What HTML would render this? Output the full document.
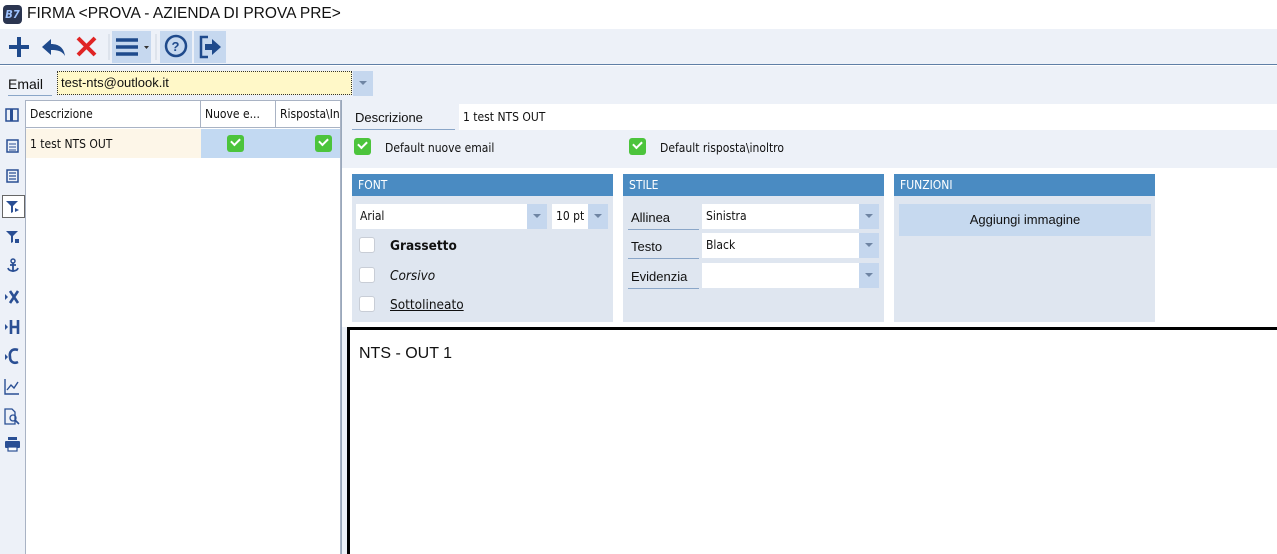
<!DOCTYPE html>
<html style="overflow:hidden;height:554px"><head><meta charset="utf-8"><style>
*{margin:0;padding:0;box-sizing:border-box}
body{width:1277px;height:554px;position:relative;overflow:hidden;background:#fff;font-family:Tahoma,"DejaVu Sans Condensed","Liberation Sans",sans-serif;font-size:12px;color:#111;white-space:nowrap}
.a{position:absolute}
.pale{background:#edf1f8}
.t{font-family:"Liberation Sans",sans-serif}
.grp{position:absolute;top:174px;height:148px;background:#dfe6f0}
.gh{height:22px;background:#4a8bc2;color:#fff;padding:4px 6px;font-size:12px}
.inp{position:absolute;background:#fff;height:25px;padding:5px 4px;white-space:nowrap;overflow:hidden}
.dd{position:absolute;width:20px;height:25px;background:#c5d7ee}
.dd:after{content:"";position:absolute;left:6px;top:10px;border:4px solid transparent;border-top:4px solid #6f85a3}
.cb{position:absolute;width:16px;height:16px;background:#fff;border:1px solid #c8cdd6;border-radius:3px}
.gc{position:absolute;width:17px;height:17px;background:#4cc43c;border-radius:3px}
.gc:after{content:"";position:absolute;left:4px;top:3px;width:7px;height:4px;border-left:2px solid #fff;border-bottom:2px solid #fff;transform:rotate(-45deg)}
.lbl{position:absolute;border-bottom:1px solid #8aa6c8;height:26px;padding:6px 3px;font-size:13px;font-family:"Liberation Sans",sans-serif}
</style></head><body>
<div class="a" style="left:3px;top:5px;width:19px;height:19px;background:#2b3550;border-radius:4px;color:#9fc3ff;font-size:11px;font-style:italic;font-weight:bold;text-align:center;line-height:19px">B7</div>
<div class="a t" style="left:27px;top:5px;font-size:15.5px">FIRMA &lt;PROVA - AZIENDA DI PROVA PRE&gt;</div>
<div class="a pale" style="left:0;top:29px;width:1277px;height:36px;border-bottom:1px solid #5f7fa6"></div>
<svg class="a" style="left:0;top:29px" width="240" height="36">
<path d="M19 8v20M9 18h20" stroke="#1f4a8c" stroke-width="4"/>
<path d="M42 18l9-8v5c8 0 13 4 14 12c-3-5-7-6-14-6v5z" fill="#1f4a8c"/>
<path d="M78 9l17 17M95 9L78 26" stroke="#e02424" stroke-width="4"/>
<rect x="108" y="5" width="2" height="26" fill="#dde3ec"/>
<rect x="112" y="2" width="39" height="32" fill="#c6d8ef"/>
<path d="M116 11h22M116 18h22M116 25h22" stroke="#1f4a8c" stroke-width="3.5"/>
<path d="M144 17h5l-2.5 3z" fill="#333"/>
<rect x="155" y="5" width="2" height="26" fill="#dde3ec"/>
<rect x="160" y="2" width="32" height="32" fill="#c6d8ef"/>
<circle cx="176" cy="17" r="10" fill="none" stroke="#1f4a8c" stroke-width="2.5"/>
<text x="171.5" y="22" font-size="13" font-weight="bold" fill="#1f4a8c" font-family="Liberation Sans">?</text>
<rect x="194" y="2" width="32" height="32" fill="#c6d8ef"/>
<path d="M208 8h-7v20h7" fill="none" stroke="#1f4a8c" stroke-width="2.5"/>
<path d="M205 15h7v-5l9 8-9 8v-5h-7z" fill="#1f4a8c"/>
</svg>
<div class="a pale" style="left:0;top:66px;width:1277px;height:38px"></div>
<div class="a t" style="left:8px;top:76px;font-size:14px;border-bottom:1px solid #8aa6c8;width:44px;height:20px">Email</div>
<div class="a t" style="left:57px;top:71px;width:295px;height:24px;background:#fff8c8;border:1px dotted #333;padding:3px 3px;font-size:13px">test-nts@outlook.it</div>
<div class="dd" style="left:353px;top:71px;height:25px"></div>
<div class="a pale" style="left:0;top:100px;width:25px;height:454px"></div>
<div class="a" style="left:2px;top:195px;width:23px;height:23px;border:1px solid #666;background:#fff"></div>
<svg class="a" style="left:0;top:100px" width="25" height="360" fill="#2a4f94" stroke="#2a4f94">
<rect x="6" y="9" width="12" height="12" fill="none" stroke-width="1.5"/><rect x="10" y="9" width="3" height="12" stroke="none"/>
<rect x="7" y="40" width="11" height="12" fill="none" stroke-width="1.5"/><path d="M9 44h7M9 47h7M9 50h7" stroke-width="1"/>
<rect x="7" y="70" width="11" height="12" fill="none" stroke-width="1.5"/><path d="M9 73h7M9 76h7M9 79h7" stroke-width="1.2"/>
<path d="M6 101h12l-5 5v6l-2 1v-7z" stroke="none"/><path d="M15 108l4 2-4 2z" stroke="none"/>
<path d="M6 131h12l-5 5v6l-2 1v-7z" stroke="none"/><rect x="15" y="139" width="4" height="4" stroke="none"/>
<circle cx="13" cy="161" r="2" fill="none" stroke-width="1.5"/><path d="M13 163v9M8 168c1 4 9 4 10 0M10 165h6" fill="none" stroke-width="1.8"/>
<path d="M5 194l3 3-3 3z" stroke="none"/><path d="M10 191l8 12M18 191l-8 12" stroke-width="2.6" fill="none"/>
<path d="M5 224l3 3-3 3z" stroke="none"/><path d="M11 220v14M18 220v14M11 227h7" stroke-width="2.6" fill="none"/>
<path d="M5 254l3 3-3 3z" stroke="none"/><path d="M18 250c-6-2-9 2-8 7c0 5 4 7 8 5" stroke-width="2.6" fill="none"/>
<path d="M5 279v15h14M7 290l4-5 3 3 4-6" stroke-width="1.4" fill="none"/>
<path d="M5 309h7l3 3v12h-10z" fill="none" stroke-width="1.3"/><circle cx="13" cy="318" r="3" fill="none" stroke-width="1.3"/><path d="M15 320l4 4" stroke-width="1.6"/>
<path d="M8 337h9v3h-9z" stroke="none"/><rect x="5" y="341" width="15" height="7" rx="1" stroke="none"/><rect x="8" y="347" width="9" height="4" fill="#fff" stroke-width="1.2"/>
</svg>
<div class="a" style="left:25px;top:100px;width:316px;height:454px;background:#fff;border:1px solid #a9b3c4;border-bottom:none"></div>
<div class="a" style="left:26px;top:101px;width:314px;height:27px;border-bottom:1px solid #a9b3c4"></div>
<div class="a" style="left:200px;top:101px;width:1px;height:27px;background:#a9b3c4"></div>
<div class="a" style="left:275px;top:101px;width:1px;height:27px;background:#a9b3c4"></div>
<div class="a" style="left:30px;top:107px">Descrizione</div>
<div class="a" style="left:205px;top:107px">Nuove e...</div>
<div class="a" style="left:280px;top:107px;width:60px;overflow:hidden;white-space:nowrap">Risposta\Inoltro</div>
<div class="a" style="left:26px;top:129px;width:175px;height:29px;background:#fdf6e8"></div>
<div class="a" style="left:201px;top:129px;width:139px;height:29px;background:#c2d9f2"></div>
<div class="a" style="left:30px;top:137px">1 test NTS OUT</div>
<div class="gc" style="left:227px;top:135px"></div>
<div class="gc" style="left:315px;top:135px"></div>
<div class="a pale" style="left:341px;top:100px;width:936px;height:454px;border-left:1px solid #9aa8bb"></div>
<div class="a" style="left:342px;top:104px;width:935px;height:26px;background:#fff"></div>
<div class="a pale" style="left:342px;top:104px;width:117px;height:26px"></div>
<div class="lbl" style="left:352px;top:104px;width:103px">Descrizione</div>
<div class="a" style="left:463px;top:110px">1 test NTS OUT</div>
<div class="a" style="left:342px;top:168px;width:935px;height:6px;background:#fff"></div>
<div class="gc" style="left:354px;top:138px"></div>
<div class="a" style="left:385px;top:141px">Default nuove email</div>
<div class="gc" style="left:629px;top:138px"></div>
<div class="a" style="left:660px;top:141px">Default risposta\inoltro</div>
<div class="a" style="left:342px;top:174px;width:935px;height:153px;background:#fff"></div>
<div class="grp" style="left:352px;width:261px"><div class="gh">FONT</div></div>
<div class="inp" style="left:356px;top:204px;width:172px">Arial</div>
<div class="dd" style="left:527px;top:204px"></div>
<div class="inp" style="left:552px;top:204px;width:36px">10 pt</div>
<div class="dd" style="left:588px;top:204px"></div>
<div class="cb" style="left:359px;top:237px"></div>
<div class="a" style="left:390px;top:238px;font-weight:bold;font-size:13.5px">Grassetto</div>
<div class="cb" style="left:359px;top:267px"></div>
<div class="a" style="left:390px;top:268px;font-style:italic;font-size:13.5px">Corsivo</div>
<div class="cb" style="left:359px;top:296px"></div>
<div class="a" style="left:390px;top:297px;text-decoration:underline;font-size:13.5px">Sottolineato</div>
<div class="grp" style="left:623px;width:261px"><div class="gh">STILE</div></div>
<div class="lbl" style="left:628px;top:204px;width:71px">Allinea</div>
<div class="lbl" style="left:628px;top:233px;width:71px">Testo</div>
<div class="lbl" style="left:628px;top:263px;width:71px">Evidenzia</div>
<div class="inp" style="left:702px;top:204px;width:157px">Sinistra</div><div class="dd" style="left:859px;top:204px"></div>
<div class="inp" style="left:702px;top:233px;width:157px">Black</div><div class="dd" style="left:859px;top:233px"></div>
<div class="inp" style="left:702px;top:263px;width:157px"></div><div class="dd" style="left:859px;top:263px"></div>
<div class="grp" style="left:894px;width:261px"><div class="gh">FUNZIONI</div></div>
<div class="a t" style="left:899px;top:204px;width:252px;height:32px;background:#c6d9ef;text-align:center;line-height:32px;font-size:13px">Aggiungi immagine</div>
<div class="a" style="left:347px;top:327px;width:935px;height:230px;background:#fff;border:3px solid #000;border-right:none;border-bottom:none"></div>
<div class="a t" style="left:359px;top:345px;font-size:16px">NTS - OUT 1</div>
</body></html>
